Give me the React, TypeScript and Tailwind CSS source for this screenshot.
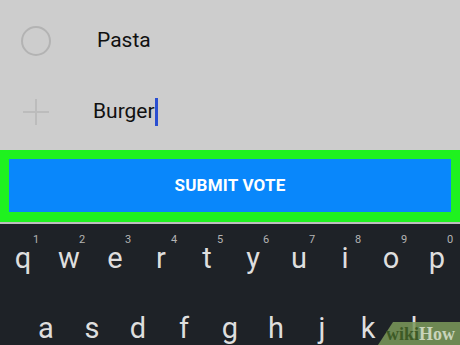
const topRow = ["q", "w", "e", "r", "t", "y", "u", "i", "o", "p"];
const nums = ["1", "2", "3", "4", "5", "6", "7", "8", "9", "0"];
const midRow = ["a", "s", "d", "f", "g", "h", "j", "k", "l"];

const font = { fontFamily: "Roboto, 'Liberation Sans', sans-serif" };

const App = () => {
  return (
    <div className="w-[460px] h-[345px] overflow-hidden relative bg-[#1e2227]" style={font}>
      {/* Poll options */}
      <div className="h-[150px] bg-[#cdcdcd] pt-[5px]">
        <div className="h-[71px] flex items-center">
          <div className="w-[71px] flex justify-center">
            <div className="w-[30px] h-[30px] rounded-full border-2 border-[#b3b3b3]" />
          </div>
          <span className="ml-[26px] text-[21px] text-[#111]">Pasta</span>
        </div>
        <div className="h-[71px] flex items-center">
          <div className="w-[71px] flex justify-center">
            <svg width="28" height="28" viewBox="0 0 28 28">
              <path d="M14 1v26M1 14h26" stroke="#bcbcbc" strokeWidth="2" />
            </svg>
          </div>
          <span className="ml-[22px] text-[21px] text-[#111] flex items-center">
            Burger
            <span className="inline-block w-[3px] h-[28px] bg-[#2a4fd1]" />
          </span>
        </div>
      </div>

      {/* Highlighted submit button */}
      <div className="h-[72px] bg-[#1ff21f] pt-[9px] pb-[10px] px-[9px]">
        <button className="w-full h-[53px] bg-[#0987fb] flex items-center justify-center text-white font-bold text-[17px] tracking-[0.2px]">
          SUBMIT VOTE
        </button>
      </div>
      <div className="h-[2px] bg-[#bdbdbd]" />

      {/* Keyboard */}
      <div className="grid grid-cols-10 h-[70px]">
        {topRow.map((k, i) => (
          <div key={k} className="relative flex justify-center pt-[20px]">
            <span className="absolute top-[8px] left-[33px] text-[11px] text-[#b4b4b4]">{nums[i]}</span>
            <span className="text-[29px] leading-none text-[#dedede]">{k}</span>
          </div>
        ))}
      </div>
      <div className="grid grid-cols-9 px-[23px]">
        {midRow.map((k) => (
          <div key={k} className="flex justify-center pt-[20px]">
            <span className="text-[29px] leading-none text-[#dedede]">{k}</span>
          </div>
        ))}
      </div>

      {/* watermark */}
      <svg className="absolute right-0 bottom-0" width="82" height="23" viewBox="0 0 82 23">
        <polygon points="15,0 82,0 82,23 0,23" fill="#7d9a5c" fillOpacity="0.85" />
      </svg>
      <div
        className="absolute right-[5px] bottom-[0px] text-[18px] font-bold leading-[22px]"
        style={{ fontFamily: "'Liberation Serif', serif" }}
      >
        <span className="text-[#3d5a26]">wiki</span>
        <span className="text-[#c9d4bb]">How</span>
      </div>
    </div>
  );
};

export default App;
